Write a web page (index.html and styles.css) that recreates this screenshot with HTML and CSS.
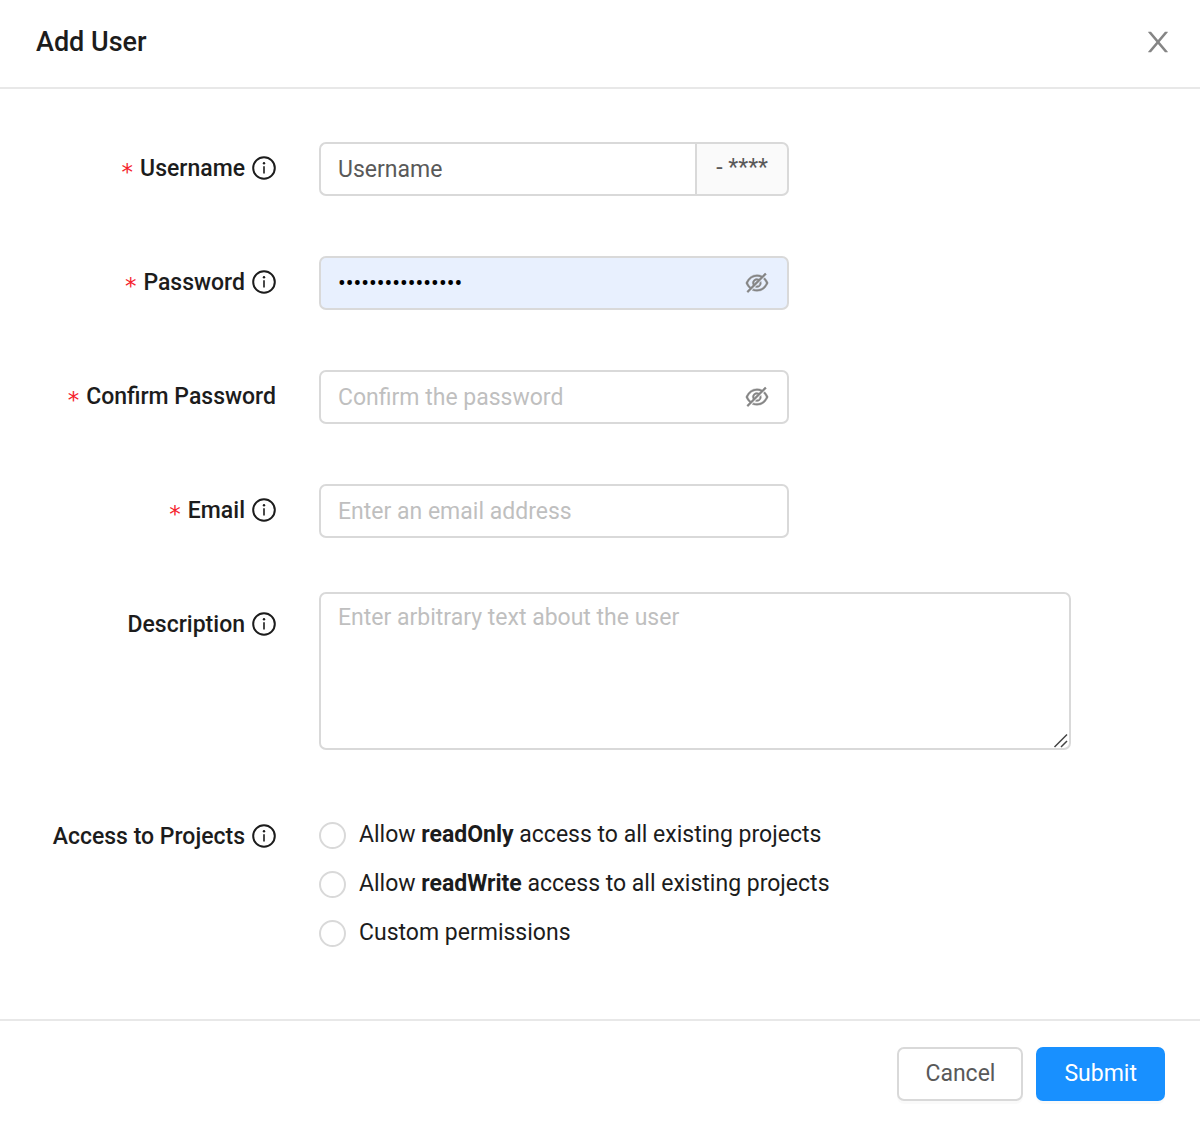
FILE: index.html
```html
<!DOCTYPE html>
<html lang="en">
<head>
<meta charset="utf-8">
<title>Add User</title>
<meta name="viewport" content="width=device-width, initial-scale=1">
<link rel="stylesheet" href="styles.css">
</head>
<body>
<svg class="sprite" aria-hidden="true">
  <symbol id="info" viewBox="0 0 24 24">
    <circle cx="12" cy="12" r="10.8" fill="none" stroke="currentColor" stroke-width="2"/>
    <path d="M12 10.2v7.4" stroke="currentColor" stroke-width="1.6" fill="none"/>
    <circle cx="12" cy="7.2" r="1.2" fill="currentColor"/>
  </symbol>
  <symbol id="eye-off" viewBox="0 0 1024 1024">
    <path fill="currentColor" stroke="currentColor" stroke-width="16" d="M942.2 486.2Q889.47 375.11 816.7 305l-50.88 50.88C807.31 395.53 843.45 447.4 874.7 512 791.5 684.2 673.4 766 512 766q-72.67 0-133.87-22.38L323 798.75Q408 838 512 838q288.3 0 430.2-300.3a60.29 60.29 0 000-51.5zm-63.57-320.64L836 122.88a8 8 0 00-11.32 0L715.31 232.2Q624.86 186 512 186q-288.3 0-430.2 300.3a60.3 60.3 0 000 51.5q56.69 119.4 136.5 191.41L112.48 835a8 8 0 000 11.31L155.17 889a8 8 0 0011.31 0l712.15-712.12a8 8 0 000-11.32zM149.3 512C232.6 339.8 350.7 258 512 258c54.54 0 104.13 9.36 149.12 28.39l-70.3 70.3a176 176 0 00-238.13 238.13l-83.42 83.42C223.1 637.49 183.3 582.28 149.3 512zm246.7 0a112.11 112.11 0 01146.2-106.69L401.31 546.2A112 112 0 01396 512z"/>
    <path fill="currentColor" stroke="currentColor" stroke-width="16" d="M508 624c-3.46 0-6.87-.16-10.25-.47l-52.82 52.82a176.09 176.09 0 00227.42-227.42l-52.82 52.82c.31 3.38.47 6.79.47 10.25a111.94 111.94 0 01-112 112z"/>
  </symbol>
</svg>
<form class="dialog">
  <header class="dialog-header">
    <h1 class="dialog-title">Add User</h1>
    <button type="button" class="close" aria-label="Close">
      <svg class="close-icon" viewBox="0 0 1024 1024" aria-hidden="true"><path fill="currentColor" d="M563.8 512l262.5-312.9c4.4-5.2.7-13.1-6.1-13.1h-79.8c-4.7 0-9.2 2.1-12.3 5.7L511.6 449.8 295.1 191.7c-3-3.6-7.5-5.7-12.3-5.7H203c-6.8 0-10.5 7.9-6.1 13.1L459.4 512 196.9 824.9A7.95 7.95 0 00203 838h79.8c4.7 0 9.2-2.1 12.3-5.7l216.5-258.1 216.5 258.1c3 3.6 7.5 5.7 12.3 5.7h79.8c6.8 0 10.5-7.9 6.1-13.1L563.8 512z"/></svg>
    </button>
  </header>

  <main class="fields">
    <div class="row">
      <label class="label" for="username"><span class="required">*</span><span>Username</span><svg class="info"><use href="#info"/></svg></label>
      <div class="control">
        <input class="input input-joined" id="username" type="text" value="Username">
        <span class="addon">- ****</span>
      </div>
    </div>
    <div class="row">
      <label class="label" for="password"><span class="required">*</span><span>Password</span><svg class="info"><use href="#info"/></svg></label>
      <div class="control">
        <input class="input input-filled" id="password" type="password" value="abcdefghijklmnop">
        <button type="button" class="reveal" aria-label="Show password"><svg class="eye"><use href="#eye-off"/></svg></button>
      </div>
    </div>
    <div class="row">
      <label class="label" for="confirm"><span class="required">*</span><span>Confirm Password</span></label>
      <div class="control">
        <input class="input" id="confirm" type="password" placeholder="Confirm the password">
        <button type="button" class="reveal" aria-label="Show password"><svg class="eye"><use href="#eye-off"/></svg></button>
      </div>
    </div>
    <div class="row">
      <label class="label" for="email"><span class="required">*</span><span>Email</span><svg class="info"><use href="#info"/></svg></label>
      <div class="control">
        <input class="input" id="email" type="email" placeholder="Enter an email address">
      </div>
    </div>
    <div class="row row-area">
      <label class="label" for="description"><span>Description</span><svg class="info"><use href="#info"/></svg></label>
      <div class="control control-wide">
        <textarea class="input area" id="description" placeholder="Enter arbitrary text about the user"></textarea>
        <svg class="grip" viewBox="0 0 16 16" aria-hidden="true"><path d="M1.5 14L14 1.5M8 14L14 8" stroke="#444" stroke-width="1.5" fill="none"/></svg>
      </div>
    </div>
    <div class="row" role="radiogroup" aria-labelledby="access">
      <div class="label" id="access"><span>Access to Projects</span><svg class="info"><use href="#info"/></svg></div>
      <div class="options">
        <label class="option"><input class="radio" type="radio" name="access"><span>Allow <b>readOnly</b> access to all existing projects</span></label>
        <label class="option"><input class="radio" type="radio" name="access"><span>Allow <b>readWrite</b> access to all existing projects</span></label>
        <label class="option"><input class="radio" type="radio" name="access"><span>Custom permissions</span></label>
      </div>
    </div>
  </main>

  <footer class="dialog-footer">
    <button type="button" class="button">Cancel</button>
    <button type="submit" class="button button-primary">Submit</button>
  </footer>
</form>
</body>
</html>
```
FILE: styles.css
```css
* { box-sizing: border-box; }

body {
  margin: 0;
  background: #fff;
  color: #1c1c1c;
  font: 400 23px/36px Roboto, "Liberation Sans", sans-serif;
}

.sprite { display: none; }

.dialog-header {
  display: flex;
  align-items: center;
  justify-content: space-between;
  padding: 20px 26px 23px 36px;
  border-bottom: 2px solid #e8e8e8;
}

.dialog-title {
  margin: 0;
  font-size: 27px;
  font-weight: 500;
  line-height: 44px;
}

.close {
  display: flex;
  padding: 0;
  border: 0;
  background: none;
  color: #858585;
}

.close-icon { width: 32px; height: 32px; }

.fields {
  display: flex;
  flex-direction: column;
  gap: 60px;
  padding: 53px 36px 68px 0;
}

.row {
  display: grid;
  grid-template-columns: 276px minmax(0, 1fr);
  column-gap: 43px;
}

.label {
  display: flex;
  align-items: center;
  justify-content: flex-end;
  height: 54px;
  gap: 7px;
  font-weight: 500;
  white-space: nowrap;
}

.required {
  padding-top: 6px;
  color: #f5222d;
  font-family: "DejaVu Sans", sans-serif;
  font-weight: 400;
}

.info {
  width: 24px;
  height: 24px;
  margin-bottom: 2px;
}

.control {
  position: relative;
  display: flex;
  max-width: 470px;
}

.control-wide { max-width: 752px; }

.input {
  flex: 1;
  min-width: 0;
  height: 54px;
  padding: 0 17px;
  border: 2px solid #d9d9d9;
  border-radius: 7px;
  background: #fff;
  color: #595959;
  font: inherit;
}

.input::placeholder { color: #bfbfbf; opacity: 1; }

.input-joined { border-right: 0; border-radius: 7px 0 0 7px; }

.input-filled { background: #e8f0fe; color: #000; }

.addon {
  padding: 6px 19px;
  border: 2px solid #d9d9d9;
  border-radius: 0 7px 7px 0;
  background: #fafafa;
  color: #595959;
}

.reveal {
  position: absolute;
  top: 14px;
  right: 19px;
  display: flex;
  padding: 0;
  border: 0;
  background: none;
  color: #858585;
}

.eye { width: 26px; height: 26px; }

.row-area { margin-top: -6px; }

.row-area .label { height: 66px; }

.area {
  display: block;
  height: 158px;
  padding: 6px 17px;
  resize: none;
}

.grip {
  position: absolute;
  right: 2px;
  bottom: 1px;
  width: 16px;
  height: 16px;
}

.options {
  display: flex;
  flex-direction: column;
  gap: 13px;
  padding-top: 7px;
}

.option {
  display: flex;
  align-items: center;
  gap: 13px;
}

.option b { font-weight: 700; }

.radio {
  appearance: none;
  flex: none;
  width: 27px;
  height: 27px;
  margin: 0;
  border: 2px solid #d9d9d9;
  border-radius: 50%;
  background: #fff;
}

.radio:checked { border: 8px solid #1890ff; }

.dialog-footer {
  display: flex;
  justify-content: flex-end;
  gap: 13px;
  padding: 26px 35px 24px;
  border-top: 2px solid #e8e8e8;
}

.button {
  height: 54px;
  padding: 0 26px;
  border: 2px solid #d9d9d9;
  border-radius: 7px;
  background: #fff;
  box-shadow: 0 3px 0 rgba(0, 0, 0, 0.02);
  color: #595959;
  font: inherit;
}

.button-primary {
  border-color: #1890ff;
  background: #1890ff;
  color: #fff;
}
```
